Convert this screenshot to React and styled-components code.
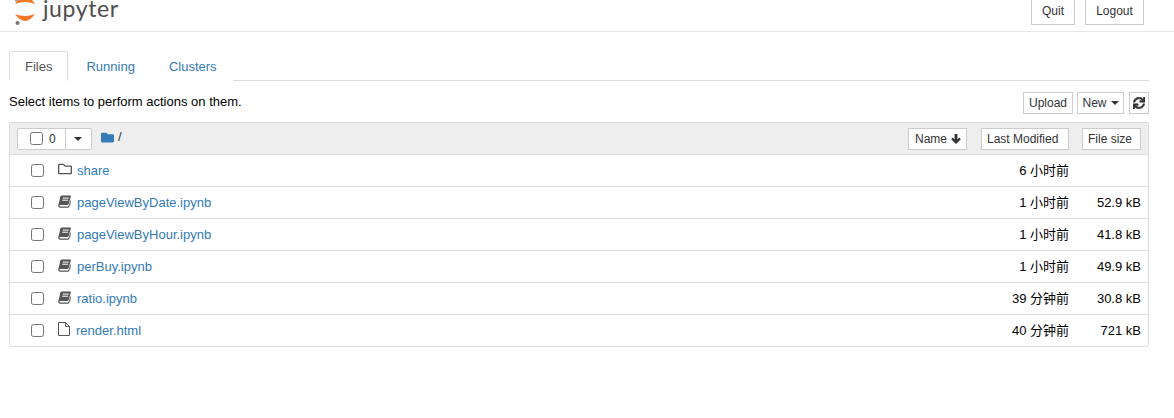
import styled, { createGlobalStyle } from "styled-components";
import { FaRegFolder, FaFolder, FaSync } from "react-icons/fa";

const GlobalStyle = createGlobalStyle`
  html, body {
    margin: 0;
    padding: 0;
    background: #fff;
    color: #000;
    font: 13px/18px "Liberation Sans", Arial, "Noto Sans CJK SC", sans-serif;
  }
  * { box-sizing: border-box; }
`;

const Header = styled.header`
  display: flex;
  align-items: flex-end;
  justify-content: space-between;
  height: 32px;
  padding: 0 30px 6px 15px;
  border-bottom: 1px solid #e7e7e7;
  overflow: hidden;
`;

const Logo = styled.div`
  display: flex;
  align-items: flex-start;
  gap: 7px;
  height: 25px;
`;

const LogoText = styled.span`
  font: 400 23px/24px "Lato", sans-serif;
  letter-spacing: 0.6px;
  color: #4e4e4e;
  margin-top: -4px;
`;

const HeaderActions = styled.div`
  display: flex;
  gap: 10px;
`;

const HeaderButton = styled.button`
  height: 30px;
  width: ${(p) => p.$width}px;
  padding: 2px 0 0;
  border: 1px solid #ccc;
  background: #fff;
  color: #333;
  font: 12px/18px "Liberation Sans", Arial, sans-serif;
`;

const Main = styled.main`
  padding: 19px 25px 0 9px;
`;

const Tabs = styled.nav`
  display: flex;
  height: 30px;
  border-bottom: 1px solid #ddd;
`;

const Tab = styled.a`
  display: block;
  height: 30px;
  padding: 6px 15px 0 ${(p) => (p.$active ? 15 : 17)}px;
  border: 1px solid ${(p) => (p.$active ? "#ddd" : "transparent")};
  border-bottom-color: ${(p) => (p.$active ? "#fff" : "transparent")};
  border-radius: 2px 2px 0 0;
  color: ${(p) => (p.$active ? "#555" : "#337ab7")};
  background: #fff;
`;

const ActionBar = styled.div`
  display: flex;
  align-items: center;
  justify-content: space-between;
  height: 22px;
  margin: 11px 0 8px;
`;

const Hint = styled.span`
  margin-top: -2px;
`;

const ActionButtons = styled.div`
  display: flex;
  gap: 4px;
`;

const SmallButton = styled.button`
  display: flex;
  align-items: center;
  justify-content: ${(p) => (p.$inset ? "flex-start" : "center")};
  gap: 4px;
  height: 22px;
  width: ${(p) => p.$width}px;
  margin-left: ${(p) => p.$gap || 0}px;
  padding: 0 0 0 ${(p) => p.$inset || 0}px;
  border: 1px solid #ccc;
  background: #fff;
  color: #333;
  font: 12px/18px "Liberation Sans", Arial, sans-serif;
`;

const Caret = styled.span`
  width: 0;
  height: 0;
  border-top: 4px solid #333;
  border-left: 4px solid transparent;
  border-right: 4px solid transparent;
`;

const List = styled.section`
  border: 1px solid #ddd;
  border-radius: 2px;
`;

const ListHeader = styled.div`
  display: flex;
  align-items: center;
  height: 32px;
  padding: 0 7px;
  background: #eee;
  border-bottom: 1px solid #ddd;
`;

const SelectGroup = styled.div`
  display: flex;
  height: 22px;
  background: #fff;
  border: 1px solid #ccc;
  border-radius: 2px;
`;

const SelectCount = styled.label`
  display: flex;
  align-items: center;
  width: 48px;
  padding-left: 12px;
  border-right: 1px solid #ccc;
  font-size: 12px;
  color: #333;

  input {
    margin-right: 6px;
  }
`;

const SelectCaret = styled.div`
  display: flex;
  align-items: center;
  justify-content: center;
  width: 25px;
  padding-right: 1px;
`;

const Check = styled.input.attrs({ type: "checkbox" })`
  width: 13px;
  height: 13px;
  margin: 0 7px 0 0;
  flex: none;
`;

const Breadcrumb = styled.div`
  display: flex;
  align-items: center;
  gap: 4px;
  margin: -3px 0 0 9px;
  flex: 1;
  color: #333;
  svg { color: #337ab7; }
`;

const Row = styled.div`
  display: flex;
  align-items: center;
  height: 32px;
  padding: 0 7px 0 21px;
  &:not(:last-child) { border-bottom: 1px solid #ddd; }
  &:last-child { height: 31px; }
`;

const IconSlot = styled.span`
  display: flex;
  align-items: center;
  width: ${(p) => p.$width || 19}px;
  margin: -3px 0 0 7px;
  color: #555;
`;

const Name = styled.a`
  flex: 1;
  color: #337ab7;
`;

const Modified = styled.span`
  color: #000;
`;

const Size = styled.span`
  width: 72px;
  text-align: right;
`;

function BookIcon() {
  return (
    <svg width="13" height="13" viewBox="0 0 13 13">
      <path
        d="M3.6 0.5 H12.4 C12.9 0.5 13 0.9 12.9 1.3 L10.6 8.9 C10.4 9.6 10 9.9 9.3 9.9 H2.2 C1.6 9.9 1.4 10.3 1.5 10.7 C1.6 11.1 2 11.4 2.5 11.4 H9.8 C10.2 11.4 10.5 11.2 10.7 10.7 L12.7 4 L12.6 8.5 L11.4 11.4 C11 12.3 10.4 12.7 9.6 12.7 H2.2 C0.9 12.7 0.1 11.6 0.2 10.4 L2.4 1.6 C2.6 1 3 0.5 3.6 0.5 Z"
        fill="#555"
      />
      <path d="M4.8 3.1 H10.8 M4.1 5.2 H10.1" stroke="#fff" strokeWidth="1" />
    </svg>
  );
}

function PageIcon() {
  return (
    <svg width="12" height="14" viewBox="0 0 12 14" fill="none" stroke="#555">
      <path d="M0.5 0.5 H7.5 L11.5 4.5 V13.5 H0.5 Z" />
      <path d="M7.5 0.5 V4.5 H11.5" />
    </svg>
  );
}

function SortArrow() {
  return (
    <svg width="10" height="10" viewBox="0 0 10 10">
      <path d="M5 10 L0.2 5.2 L1.8 3.6 L3.6 5.4 V0 H6.4 V5.4 L8.2 3.6 L9.8 5.2 Z" fill="#333" />
    </svg>
  );
}

const files = [
  { name: "share", icon: "folder", modified: "6 小时前", size: "" },
  { name: "pageViewByDate.ipynb", icon: "book", modified: "1 小时前", size: "52.9 kB" },
  { name: "pageViewByHour.ipynb", icon: "book", modified: "1 小时前", size: "41.8 kB" },
  { name: "perBuy.ipynb", icon: "book", modified: "1 小时前", size: "49.9 kB" },
  { name: "ratio.ipynb", icon: "book", modified: "39 分钟前", size: "30.8 kB" },
  { name: "render.html", icon: "file", modified: "40 分钟前", size: "721 kB" },
];

function FileIcon({ type }) {
  if (type === "folder") return <FaRegFolder size={14} />;
  if (type === "file") return <PageIcon />;
  return <BookIcon />;
}

export default function App() {
  return (
    <>
      <GlobalStyle />
      <Header>
        <Logo>
          <svg width="21" height="25" viewBox="0 0 21 25">
            <path d="M0 4 Q10 0 20 4 Q10 -12 0 4 Z" fill="#f37726" />
            <path d="M0 14 Q10 18 20 14 Q10 28 0 14 Z" fill="#f37726" />
            <circle cx="2.5" cy="23" r="2" fill="#767677" />
            <circle cx="1" cy="0" r="1.5" fill="#989798" />
          </svg>
          <LogoText>jupyter</LogoText>
        </Logo>
        <HeaderActions>
          <HeaderButton $width={44}>Quit</HeaderButton>
          <HeaderButton $width={59}>Logout</HeaderButton>
        </HeaderActions>
      </Header>
      <Main>
        <Tabs>
          <Tab $active>Files</Tab>
          <Tab>Running</Tab>
          <Tab>Clusters</Tab>
        </Tabs>
        <ActionBar>
          <Hint>Select items to perform actions on them.</Hint>
          <ActionButtons>
            <SmallButton $width={50}>Upload</SmallButton>
            <SmallButton $width={47}>
              New <Caret />
            </SmallButton>
            <SmallButton $width={20} $gap={1}>
              <FaSync size={12} stroke="currentColor" strokeWidth={24} />
            </SmallButton>
          </ActionButtons>
        </ActionBar>
        <List>
          <ListHeader>
            <SelectGroup>
              <SelectCount>
                <Check />0
              </SelectCount>
              <SelectCaret>
                <Caret />
              </SelectCaret>
            </SelectGroup>
            <Breadcrumb>
              <FaFolder size={13} /> /
            </Breadcrumb>
            <SmallButton $width={59} $inset={6}>
              Name <SortArrow />
            </SmallButton>
            <SmallButton $width={88} $gap={14} $inset={5}>Last Modified</SmallButton>
            <SmallButton $width={59} $gap={13} $inset={5}>File size</SmallButton>
          </ListHeader>
          {files.map((file) => (
            <Row key={file.name}>
              <Check />
              <IconSlot $width={file.icon === "file" ? 18 : 19}>
                <FileIcon type={file.icon} />
              </IconSlot>
              <Name>{file.name}</Name>
              <Modified>{file.modified}</Modified>
              <Size>{file.size}</Size>
            </Row>
          ))}
        </List>
      </Main>
    </>
  );
}
